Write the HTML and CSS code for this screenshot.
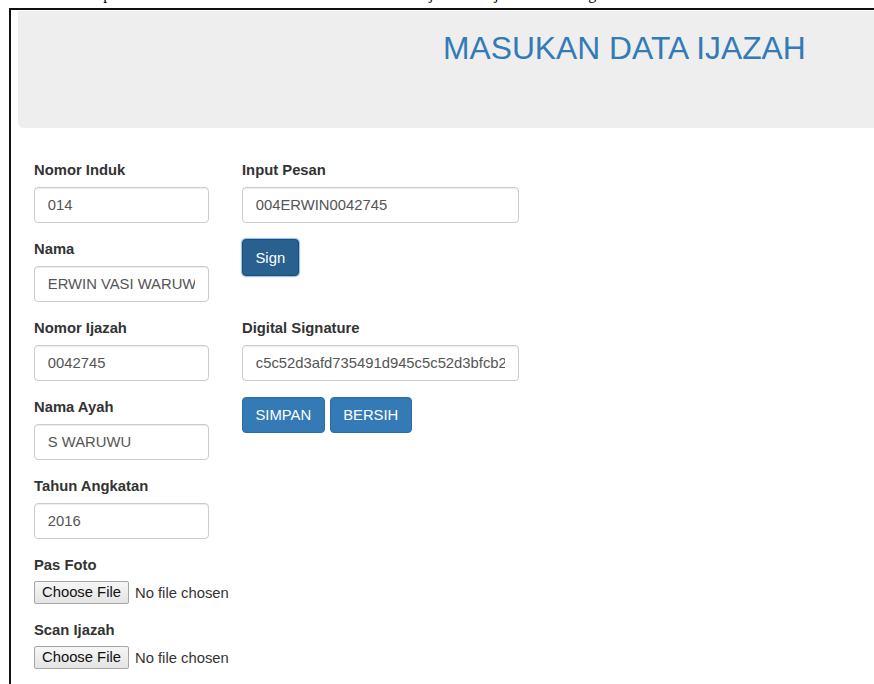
FILE: index.html
```html
<!DOCTYPE html>
<html lang="id">
<head>
<meta charset="utf-8">
<title>Masukan Data Ijazah</title>
<link rel="stylesheet" href="styles.css">
</head>
<body>
<p class="caption">Tampilan halaman untuk memasukkan data lulusan di Ijazah menjadi Tanda Tangan</p>
<div class="frame">
  <div class="jumbotron">
    <h1 class="title">MASUKAN DATA IJAZAH</h1>
  </div>
  <form class="form">
    <div class="col col-left">
      <div class="group">
        <label class="label" for="nim">Nomor Induk</label>
        <input class="input" id="nim" type="text" value="014">
      </div>
      <div class="group">
        <label class="label" for="nama">Nama</label>
        <input class="input" id="nama" type="text" value="ERWIN VASI WARUWU">
      </div>
      <div class="group">
        <label class="label" for="noijazah">Nomor Ijazah</label>
        <input class="input" id="noijazah" type="text" value="0042745">
      </div>
      <div class="group">
        <label class="label" for="ayah">Nama Ayah</label>
        <input class="input" id="ayah" type="text" value="S WARUWU">
      </div>
      <div class="group">
        <label class="label" for="tahun">Tahun Angkatan</label>
        <input class="input" id="tahun" type="text" value="2016">
      </div>
      <div class="group group-file">
        <span class="label">Pas Foto</span>
        <div class="file">
          <span class="file-btn">Choose File</span>
          <span class="file-name">No file chosen</span>
        </div>
      </div>
      <div class="group group-file">
        <span class="label">Scan Ijazah</span>
        <div class="file">
          <span class="file-btn">Choose File</span>
          <span class="file-name">No file chosen</span>
        </div>
      </div>
    </div>
    <div class="col col-right">
      <div class="group">
        <label class="label" for="pesan">Input Pesan</label>
        <input class="input" id="pesan" type="text" value="004ERWIN0042745">
      </div>
      <div class="group group-sign">
        <button class="btn btn-sign" type="button">Sign</button>
      </div>
      <div class="group">
        <label class="label" for="signature">Digital Signature</label>
        <input class="input" id="signature" type="text" value="c5c52d3afd735491d945c5c52d3bfcb2">
      </div>
      <div class="actions">
        <button class="btn" type="submit">SIMPAN</button>
        <button class="btn" type="reset">BERSIH</button>
      </div>
    </div>
  </form>
</div>
</body>
</html>
```
FILE: styles.css
```css
html, body {
  margin: 0;
  height: 100%;
  overflow: hidden;
  background: #fff;
}

body {
  font-family: "Liberation Sans", Arial, Helvetica, sans-serif;
  font-size: 14.8px;
  color: #333;
}

/* document text line above the figure; only its lower edge is on the page */
.caption {
  margin: -15px 0 0;
  padding-left: 75px;
  font-family: "Liberation Serif", "Times New Roman", serif;
  font-size: 16px;
  line-height: 18px;
  color: #000;
  white-space: nowrap;
}

/* figure frame */
.frame {
  margin: 5px 0 0 9px;
  height: 700px;
  border-top: 2px solid #111;
  border-left: 2px solid #111;
}

.jumbotron {
  margin: 1px 0 32px 7px;
  padding: 20px 0 63px 425px;
  background: #eee;
  border-bottom-left-radius: 6px;
}

.title {
  margin: 0;
  font-size: 31.8px;
  font-weight: normal;
  line-height: 34px;
  color: #337ab7;
  white-space: nowrap;
}

.form {
  display: flex;
  gap: 33px;
  padding-left: 23px;
}

.col-left {
  width: 175px;
}

.col-right {
  width: 277px;
}

.group {
  margin-bottom: 16px;
}

.label {
  display: block;
  margin-bottom: 6px;
  font-weight: bold;
  line-height: 21px;
}

.input {
  display: block;
  box-sizing: border-box;
  width: 100%;
  height: 36px;
  padding: 6px 12.8px;
  border: 1px solid #ccc;
  border-radius: 4px;
  background: #fff;
  font: inherit;
  color: #555;
  box-shadow: inset 0 1px 1px rgba(0, 0, 0, 0.075);
}

.group-file .label {
  margin-bottom: 5px;
}

.file {
  display: flex;
  align-items: center;
  gap: 6px;
  height: 23px;
  white-space: nowrap;
}

.file-btn {
  flex: none;
  box-sizing: border-box;
  height: 23px;
  padding: 0 7px;
  line-height: 21px;
  border: 1px solid #a6a6a6;
  border-radius: 2px;
  background: linear-gradient(#f6f6f6, #e4e4e4);
  color: #111;
}

.file-name {
  flex: none;
  color: #333;
}

.group-sign {
  margin-bottom: 42px;
}

.btn {
  box-sizing: border-box;
  height: 36px;
  padding: 0 12.5px;
  border: 1px solid #2e6da4;
  border-radius: 4px;
  background: #337ab7;
  color: #fff;
  font: inherit;
  line-height: 34px;
  cursor: pointer;
}

.btn-sign {
  height: 37px;
  background: #286090;
  border-color: #204d74;
  box-shadow: 0 0 1px 1px rgba(102, 160, 235, 0.7);
}

.actions {
  display: flex;
  gap: 5px;
}
```
